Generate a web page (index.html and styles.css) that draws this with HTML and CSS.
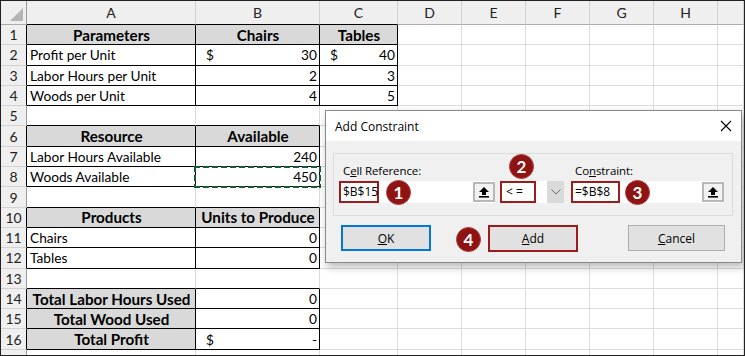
FILE: index.html
```html
<!DOCTYPE html>
<html lang="en">
<head>
    <meta charset="UTF-8">
    <meta name="viewport" content="width=device-width, initial-scale=1.0">
    <title>Add Constraint</title>
    <link rel="stylesheet" href="styles.css">
</head>
<body>
<div class="sheet">
    <div class="grid">
        <div class="corner"><span class="tri"></span></div>
        <div class="ch tb">A</div><div class="ch tb">B</div><div class="ch tb">C</div><div class="ch">D</div><div class="ch">E</div><div class="ch">F</div><div class="ch">G</div><div class="ch">H</div><div class="ch"></div>

        <div class="rh rt">1</div><div class="c hd t">Parameters</div><div class="c hd t">Chairs</div><div class="c hd t">Tables</div><div class="c"></div><div class="c"></div><div class="c"></div><div class="c"></div><div class="c"></div><div class="c"></div>
        <div class="rh rt">2</div><div class="c t">Profit per Unit</div><div class="c t acct"><span>$</span><span>30</span></div><div class="c t acct"><span>$</span><span>40</span></div><div class="c"></div><div class="c"></div><div class="c"></div><div class="c"></div><div class="c"></div><div class="c"></div>
        <div class="rh rt">3</div><div class="c t">Labor Hours per Unit</div><div class="c t num">2</div><div class="c t num">3</div><div class="c"></div><div class="c"></div><div class="c"></div><div class="c"></div><div class="c"></div><div class="c"></div>
        <div class="rh rt">4</div><div class="c t">Woods per Unit</div><div class="c t num">4</div><div class="c t num">5</div><div class="c"></div><div class="c"></div><div class="c"></div><div class="c"></div><div class="c"></div><div class="c"></div>
        <div class="rh">5</div><div class="c tb"></div><div class="c tb"></div><div class="c"></div><div class="c"></div><div class="c"></div><div class="c"></div><div class="c"></div><div class="c"></div><div class="c"></div>
        <div class="rh rt">6</div><div class="c hd t">Resource</div><div class="c hd t">Available</div><div class="c"></div><div class="c"></div><div class="c"></div><div class="c"></div><div class="c"></div><div class="c"></div><div class="c"></div>
        <div class="rh rt">7</div><div class="c t">Labor Hours Available</div><div class="c t num">240</div><div class="c"></div><div class="c"></div><div class="c"></div><div class="c"></div><div class="c"></div><div class="c"></div><div class="c"></div>
        <div class="rh rt">8</div><div class="c t">Woods Available</div><div class="c t num copy">450</div><div class="c"></div><div class="c"></div><div class="c"></div><div class="c"></div><div class="c"></div><div class="c"></div><div class="c"></div>
        <div class="rh">9</div><div class="c tb"></div><div class="c tb"></div><div class="c"></div><div class="c"></div><div class="c"></div><div class="c"></div><div class="c"></div><div class="c"></div><div class="c"></div>
        <div class="rh rt">10</div><div class="c hd t">Products</div><div class="c hd t">Units to Produce</div><div class="c"></div><div class="c"></div><div class="c"></div><div class="c"></div><div class="c"></div><div class="c"></div><div class="c"></div>
        <div class="rh rt">11</div><div class="c t">Chairs</div><div class="c t num">0</div><div class="c"></div><div class="c"></div><div class="c"></div><div class="c"></div><div class="c"></div><div class="c"></div><div class="c"></div>
        <div class="rh rt">12</div><div class="c t">Tables</div><div class="c t num">0</div><div class="c"></div><div class="c"></div><div class="c"></div><div class="c"></div><div class="c"></div><div class="c"></div><div class="c"></div>
        <div class="rh">13</div><div class="c tb"></div><div class="c tb"></div><div class="c"></div><div class="c"></div><div class="c"></div><div class="c"></div><div class="c"></div><div class="c"></div><div class="c"></div>
        <div class="rh rt">14</div><div class="c hd t">Total Labor Hours Used</div><div class="c t num">0</div><div class="c"></div><div class="c"></div><div class="c"></div><div class="c"></div><div class="c"></div><div class="c"></div><div class="c"></div>
        <div class="rh rt">15</div><div class="c hd t">Total Wood Used</div><div class="c t num">0</div><div class="c"></div><div class="c"></div><div class="c"></div><div class="c"></div><div class="c"></div><div class="c"></div><div class="c"></div>
        <div class="rh rt">16</div><div class="c hd t">Total Profit</div><div class="c t acct"><span>$</span><span>-</span></div><div class="c"></div><div class="c"></div><div class="c"></div><div class="c"></div><div class="c"></div><div class="c"></div><div class="c"></div>
        <div class="rh"></div><div class="c"></div><div class="c"></div><div class="c"></div><div class="c"></div><div class="c"></div><div class="c"></div><div class="c"></div><div class="c"></div><div class="c"></div>
    </div>

    <div class="dialog">
        <div class="title">
            <span>Add Constraint</span>
            <svg class="close" width="12" height="12" viewBox="0 0 12 12">
                <path d="M1 1 L11 11 M11 1 L1 11" stroke="#000" stroke-width="1.1" fill="none"/>
            </svg>
        </div>
        <div class="body">
            <div class="group">
                <div class="field ref">
                    <div class="label">C<u>e</u>ll Reference:</div>
                    <div class="box">
                        <span class="mark">$B$15</span>
                        <span class="fill"></span>
                        <span class="pick">
                            <svg width="12" height="12" viewBox="0 0 12 12"><path d="M6 1 L11 6 H8 V9 H4 V6 H1 Z"/><rect x="1" y="10" width="10" height="1.6"/></svg>
                        </span>
                    </div>
                    <span class="badge b1">1</span>
                </div>
                <div class="field op">
                    <div class="label">&nbsp;</div>
                    <div class="box">
                        <span class="mark">&lt; =</span>
                        <span class="fill"></span>
                        <span class="drop">
                            <svg width="10" height="6" viewBox="0 0 10 6"><path d="M0.5 0.5 L5 5 L9.5 0.5" stroke="#6d6d6d" fill="none"/></svg>
                        </span>
                    </div>
                    <span class="badge b2">2</span>
                </div>
                <div class="field con">
                    <div class="label">Co<u>n</u>straint:</div>
                    <div class="box">
                        <span class="mark">=$B$8</span>
                        <span class="fill"></span>
                        <span class="pick">
                            <svg width="12" height="12" viewBox="0 0 12 12"><path d="M6 1 L11 6 H8 V9 H4 V6 H1 Z"/><rect x="1" y="10" width="10" height="1.6"/></svg>
                        </span>
                    </div>
                    <span class="badge b3">3</span>
                </div>
            </div>
            <div class="buttons">
                <button class="btn ok"><u>O</u>K</button>
                <button class="btn add"><u>A</u>dd<span class="badge b4">4</span></button>
                <button class="btn cancel"><u>C</u>ancel</button>
            </div>
        </div>
    </div>
</div>
</body>
</html>
```

FILE: styles.css
```css
* {
    box-sizing: border-box;
}
body {
    margin: 0;
    background-color: #fff;
}
.sheet {
    position: relative;
    width: 745px;
    height: 356px;
    border: 1px solid #222;
    overflow: hidden;
    font-family: Lato, "Open Sans", sans-serif;
    font-size: 13.7px;
    color: #000;
}
.grid {
    display: grid;
    grid-template-columns: 26px 169px 124px 78px 64px 64px 64px 64px 64px 1fr;
    grid-template-rows: 24px repeat(17, 20.3px);
}
.grid > div {
    border-right: 1px solid #dcdcdc;
    border-bottom: 1px solid #dcdcdc;
    display: flex;
    align-items: center;
    white-space: nowrap;
    overflow: hidden;
}
.corner {
    background-color: #efefef;
    position: relative;
}
.corner .tri {
    position: absolute;
    right: 3px;
    bottom: 3px;
    width: 0;
    height: 0;
    border-left: 13px solid transparent;
    border-bottom: 13px solid #b4b4b4;
}
.grid > .ch {
    background-color: #efefef;
    justify-content: center;
    color: #222;
    font-size: 14px;
    border-bottom-color: #ababab;
    border-right-color: #d2d2d2;
}
.grid > .rh {
    background-color: #efefef;
    justify-content: center;
    color: #222;
    font-size: 14px;
    border-bottom-color: #d2d2d2;
    border-right-color: #9a9a9a;
}
.grid > .corner {
    border-bottom-color: #ababab;
    border-right-color: #9a9a9a;
}
.grid > .rh.rt {
    border-right-color: #000;
}
.grid > .tb {
    border-bottom-color: #000;
}
.grid > .t {
    border-right-color: #000;
    border-bottom-color: #000;
    padding: 0 2px 0 3px;
}
.hd {
    background-color: #d9d9d9;
    font-weight: bold;
    font-size: 15.2px;
    justify-content: center;
}
.num {
    justify-content: flex-end;
}
.acct {
    justify-content: space-between;
    padding-left: 10px !important;
}
.copy {
    position: relative;
    overflow: visible !important;
}
.copy::after {
    content: "";
    position: absolute;
    left: -2px;
    top: -1px;
    right: -2px;
    bottom: -2px;
    background:
        repeating-linear-gradient(90deg, #155c34 0 6px, transparent 6px 9px) top / 100% 2px no-repeat,
        repeating-linear-gradient(90deg, #155c34 0 6px, transparent 6px 9px) bottom / 100% 2px no-repeat,
        repeating-linear-gradient(180deg, #155c34 0 6px, transparent 6px 9px) left / 2px 100% no-repeat,
        repeating-linear-gradient(180deg, #155c34 0 6px, transparent 6px 9px) right / 2px 100% no-repeat;
}

/* dialog */
.dialog {
    position: absolute;
    left: 324px;
    top: 109px;
    width: 417px;
    height: 153px;
    border: 1px solid #8a8a8a;
    background-color: #f0f0f0;
    box-shadow: 2px 4px 8px rgba(0, 0, 0, 0.28);
    font-family: "Open Sans", sans-serif;
    font-size: 11.5px;
    color: #000;
}
.title {
    height: 30px;
    background-color: #fff;
    display: flex;
    align-items: center;
    justify-content: space-between;
    padding: 0 9px 0 9px;
    font-size: 12px;
}
.group {
    margin: 12px 8px 0 7px;
    height: 63px;
    border: 1px solid #dcdcdc;
    padding: 10px 0 0 5px;
    display: flex;
    gap: 5px;
}
.field {
    position: relative;
}
.field.ref {
    width: 156px;
}
.field.op {
    width: 64px;
    margin-right: 2px;
}
.field.con {
    width: 153px;
}
.label {
    height: 17px;
    line-height: 14px;
    padding-left: 4px;
    letter-spacing: -0.1px;
}
.box {
    height: 22px;
    display: flex;
    background-color: #fff;
}
.mark {
    border: 2px solid #9c1c1c;
    padding: 0 2px;
    display: flex;
    align-items: center;
    line-height: 1;
    font-size: 12px;
}
.ref .mark {
    width: 40px;
}
.op .mark {
    width: 36px;
    padding-left: 4px;
}
.con .mark {
    width: 49px;
}
.fill {
    flex: 1;
}
.pick {
    width: 22px;
    margin: 1px 0;
    border: 2px solid #b8b8b8;
    background-color: #f2f2f2;
    display: flex;
    align-items: center;
    justify-content: center;
}
.drop {
    width: 17px;
    background-color: #dadada;
    display: flex;
    align-items: center;
    justify-content: center;
}
.badge {
    position: absolute;
    width: 25px;
    height: 25px;
    border-radius: 50%;
    background-color: #8e1414;
    border: 1px solid #b33a3a;
    color: #fff;
    font-family: Lato, sans-serif;
    font-weight: bold;
    font-size: 17px;
    display: flex;
    align-items: center;
    justify-content: center;
}
.b1 {
    left: 47px;
    top: 16px;
}
.b2 {
    left: 9px;
    top: -10px;
}
.b3 {
    left: 54px;
    top: 16px;
}
.b4 {
    left: -34px;
    top: 0px;
}
.buttons {
    display: flex;
    margin: 9px 0 0 15px;
}
.btn {
    position: relative;
    height: 26px;
    background-color: #e1e1e1;
    border: 1px solid #adadad;
    font-family: "Open Sans", sans-serif;
    font-size: 12px;
    color: #000;
    padding: 0;
}
.ok {
    width: 90px;
    border: 2px solid #0078d7;
}
.add {
    width: 90px;
    margin-left: 57px;
    height: 27px;
    border: 2px solid #9c1c1c;
}
.cancel {
    width: 97px;
    margin-left: 50px;
}
```
